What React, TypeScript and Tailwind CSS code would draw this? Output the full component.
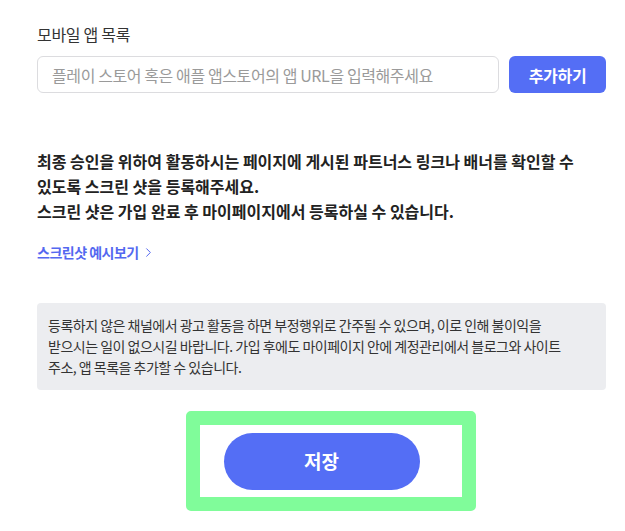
import { ChevronRight } from 'lucide-react';

const font = { fontFamily: '"Noto Sans CJK KR", "Noto Sans", sans-serif' };

export default function App() {
  return (
    <div className="w-[625px] h-[531px] bg-white overflow-hidden break-keep" style={font}>
      <div className="pl-[37px] pr-[19px] pt-[23px]">
        <section>
          <h3 className="text-[16px] leading-[22px] text-[#333] tracking-[-0.3px]">모바일 앱 목록</h3>
          <div className="mt-[11px] flex gap-[10px]">
            <input
              type="text"
              placeholder="플레이 스토어 혹은 애플 앱스토어의 앱 URL을 입력해주세요"
              className="flex-1 h-[37px] rounded-md border border-[#dcdcdf] px-[14px] text-[16px] tracking-[-0.4px] text-[#333] placeholder:text-[#9a9a9a] outline-none"
              style={font}
            />
            <button className="w-[97px] h-[37px] rounded-md bg-[#546ef5] text-white text-[16px] font-bold tracking-[-0.3px]">
              추가하기
            </button>
          </div>
        </section>

        <p className="mt-[56px] pr-[12px] text-[16px] leading-[25px] font-bold text-[#222]">
          최종 승인을 위하여 활동하시는 페이지에 게시된 파트너스 링크나 배너를 확인할 수 있도록 스크린 샷을 등록해주세요.
          <br />
          스크린 샷은 가입 완료 후 마이페이지에서 등록하실 수 있습니다.
        </p>

        <a href="#" className="mt-[18px] inline-flex items-center gap-[2px] text-[14px] leading-[20px] font-bold text-[#5468f0] tracking-[-0.5px]">
          스크린샷 예시보기
          <ChevronRight className="w-[15px] h-[15px]" strokeWidth={1.6} />
        </a>

        <div className="mt-[40px] rounded-sm bg-[#ecedf0] pl-[11px] pr-[24px] py-[12px] text-[14px] leading-[21px] text-[#333] tracking-[-0.5px]">
          등록하지 않은 채널에서 광고 활동을 하면 부정행위로 간주될 수 있으며, 이로 인해 불이익을 받으시는 일이 없으시길 바랍니다. 가입 후에도 마이페이지 안에 계정관리에서 블로그와 사이트 주소, 앱 목록을 추가할 수 있습니다.
        </div>

        <div className="relative mt-[43px] flex justify-center">
          <div className="absolute left-[149px] top-[-22px] w-[290px] h-[100px] rounded-[5px] border-[14px] border-[#80fc9a]" />
          <button className="relative w-[196px] h-[57px] rounded-full bg-[#546ef5] text-white text-[19px] font-bold">
            저장
          </button>
        </div>
      </div>
    </div>
  );
}
